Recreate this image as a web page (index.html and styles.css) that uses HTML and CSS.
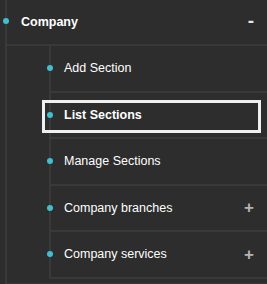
FILE: index.html
```html
<!DOCTYPE html>
<html lang="en">
<head>
  <meta charset="UTF-8" />
  <meta name="viewport" content="width=device-width, initial-scale=1.0">
  <title>Menu tree</title>
  <link rel="stylesheet" href="styles.css">
</head>
<body>
  <nav class="tree">
    <ul class="menu">
      <li class="menu-item open">
        <a class="menu-link" href="#">Company <span class="toggle minus">-</span></a>
        <ul class="submenu">
          <li class="submenu-item"><a class="submenu-link" href="#">Add Section</a></li>
          <li class="submenu-item active"><a class="submenu-link" href="#">List Sections</a></li>
          <li class="submenu-item"><a class="submenu-link" href="#">Manage Sections</a></li>
          <li class="submenu-item"><a class="submenu-link" href="#">Company branches</a><span class="toggle plus">+</span></li>
          <li class="submenu-item"><a class="submenu-link" href="#">Company services</a><span class="toggle plus">+</span></li>
        </ul>
      </li>
    </ul>
  </nav>
</body>
</html>
```

FILE: styles.css
```css
body { margin:0; background:#2d2d2d; color:#fff; font-family:"Liberation Sans", Arial, sans-serif; min-height:100vh; }
a { color:#fff; text-decoration:none; }
.menu, .submenu { list-style:none; margin:0; padding:0; }
.menu { padding-left:5px; }
.menu-item { border-left:2px solid #393939; border-bottom:2px solid #393939; }
.menu-link { position:relative; display:flex; align-items:center; height:44px; padding:0 13px 0 14px; border-bottom:2px solid #393939; font-size:12.5px; font-weight:bold; }
.menu-link::before { content:""; position:absolute; left:-4px; top:50%; width:6px; height:6px; margin-top:-4px; border-radius:50%; background:#3fbfcf; }
.toggle { margin-left:auto; }
.minus { font-size:19px; font-weight:bold; color:#e6e6e6; line-height:1; margin-top:-3px; }
.submenu { margin:0 0 4px 42px; border-left:2px solid #393939; }
.submenu-item { position:relative; display:flex; align-items:center; height:44.5px; padding:0 13px 0 13px; border-bottom:2px solid #393939; font-size:12.5px; }
.submenu-item::before { content:""; position:absolute; left:-4px; top:50%; width:6px; height:6px; margin-top:-3px; border-radius:50%; background:#3fbfcf; }
.submenu-item.active .submenu-link { font-weight:bold; }
.submenu-item.active::after { content:""; position:absolute; left:-9px; right:6px; top:7.5px; bottom:4px; border:3px solid #f0f0f0; }
.plus { font-size:17px; font-weight:bold; color:#b4b4b4; line-height:1; }
```
